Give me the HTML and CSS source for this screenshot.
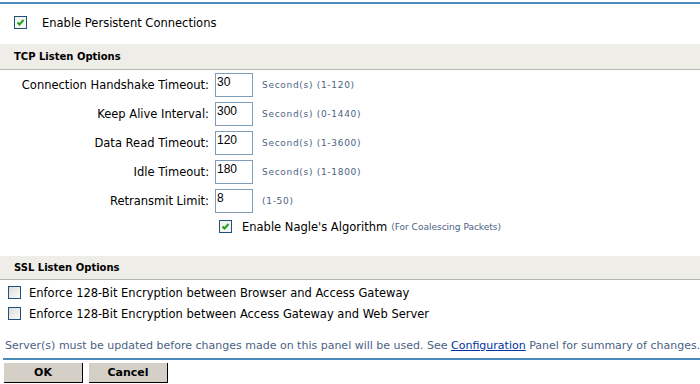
FILE: index.html
```html
<!DOCTYPE html>
<html lang="en">
<head>
    <meta charset="UTF-8">
    <title>Listen Options</title>
    <link rel="stylesheet" href="styles.css">
</head>
<body>
    <div class="page">
        <div class="topline"></div>
        <label class="check first">
            <span class="box on"><svg viewBox="0 0 9 9" width="9" height="9"><path d="M1.5 4.5 L3.5 6.5 L7.5 2" fill="none" stroke="#21a121" stroke-width="2"/></svg></span>
            Enable Persistent Connections
        </label>

        <div class="bar">TCP Listen Options</div>
        <div class="rows">
            <div class="row">
                <span class="lbl">Connection Handshake Timeout:</span>
                <input class="num" type="text" value="30">
                <span class="hint">Second(s) (1-120)</span>
            </div>
            <div class="row">
                <span class="lbl">Keep Alive Interval:</span>
                <input class="num" type="text" value="300">
                <span class="hint">Second(s) (0-1440)</span>
            </div>
            <div class="row">
                <span class="lbl">Data Read Timeout:</span>
                <input class="num" type="text" value="120">
                <span class="hint">Second(s) (1-3600)</span>
            </div>
            <div class="row">
                <span class="lbl">Idle Timeout:</span>
                <input class="num" type="text" value="180">
                <span class="hint">Second(s) (1-1800)</span>
            </div>
            <div class="row">
                <span class="lbl">Retransmit Limit:</span>
                <input class="num" type="text" value="8">
                <span class="hint">(1-50)</span>
            </div>
            <label class="check nagle">
                <span class="box on"><svg viewBox="0 0 9 9" width="9" height="9"><path d="M1.5 4.5 L3.5 6.5 L7.5 2" fill="none" stroke="#21a121" stroke-width="2"/></svg></span>
                Enable Nagle's Algorithm <span class="hint small">(For Coalescing Packets)</span>
            </label>
        </div>

        <div class="bar ssl">SSL Listen Options</div>
        <label class="check ssl-opt">
            <span class="box"></span>
            Enforce 128-Bit Encryption between Browser and Access Gateway
        </label>
        <label class="check ssl-opt">
            <span class="box"></span>
            Enforce 128-Bit Encryption between Access Gateway and Web Server
        </label>

        <p class="note">Server(s) must be updated before changes made on this panel will be used. See <a href="#">Configuration</a> Panel for summary of changes.</p>
        <div class="buttons">
            <button class="btn">OK</button>
            <button class="btn">Cancel</button>
        </div>
    </div>
</body>
</html>
```

FILE: styles.css
```css
body {
    margin: 0;
    font-family: "DejaVu Sans", Verdana, sans-serif;
    font-size: 11.5px;
    color: #000;
    background: #fff;
}
.page {
    width: 700px;
    height: 384px;
    overflow: hidden;
}
.topline {
    height: 2px;
    margin-top: 2px;
    background: #4a8ab9;
}
.check {
    display: flex;
    align-items: center;
    height: 13px;
}
.check.first {
    margin: 12px 0 0 14px;
}
.check.first .box {
    margin-right: 15px;
}
.box {
    width: 11px;
    height: 11px;
    border: 1px solid #1c5180;
    background: linear-gradient(135deg, #dcdcd7, #fbfbf9);
    display: flex;
    align-items: center;
    justify-content: center;
    margin-right: 8px;
    flex-shrink: 0;
}
.box.on {
    background: #f4f4f0;
}
.bar {
    margin-top: 15px;
    height: 25px;
    line-height: 25px;
    background: #eeede8;
    border-bottom: 1px solid #b2b8b0;
    padding-left: 14px;
    font-weight: bold;
    font-size: 10px;
}
.rows {
    padding-top: 3px;
}
.row {
    display: flex;
    align-items: center;
    height: 24px;
    margin-bottom: 5px;
}
.lbl {
    width: 215px;
    text-align: right;
    padding-right: 6px;
    box-sizing: border-box;
}
.num {
    width: 38px;
    height: 24px;
    box-sizing: border-box;
    border: 1px solid #7f9db9;
    padding: 0 1px 6px;
    margin: 0;
    font-family: "Liberation Sans", Arial, sans-serif;
    font-size: 12px;
}
.hint {
    margin-left: 9px;
    font-size: 9px;
    letter-spacing: 0.7px;
    color: #4b6283;
}
.hint.small {
    margin-left: 4px;
    letter-spacing: 0;
}
.check.nagle {
    margin: 7px 0 0 219px;
}
.check.nagle .box {
    margin-right: 10px;
}
.bar.ssl {
    margin-top: 23px;
    height: 23px;
    line-height: 23px;
}
.check.ssl-opt {
    margin: 6px 0 0 8px;
}
.check.ssl-opt + .check.ssl-opt {
    margin-top: 8px;
}
.note {
    margin: 18px 0 0 3px;
    padding: 0 0 5px 2px;
    color: #4b6283;
    font-size: 11px;
    white-space: nowrap;
    height: 15px;
    line-height: 15px;
    border-bottom: 2px solid #4a8ab9;
}
.note a {
    color: #0033a0;
}
.buttons {
    display: flex;
    gap: 6px;
    margin: 3px 0 0 4px;
}
.btn {
    width: 79px;
    height: 20px;
    padding: 0;
    background: #d4d0c8;
    border: none;
    border-right: 1px solid #000;
    border-bottom: 1px solid #000;
    font-family: "DejaVu Sans", Verdana, sans-serif;
    font-weight: bold;
    font-size: 11px;
    color: #000;
}
```
